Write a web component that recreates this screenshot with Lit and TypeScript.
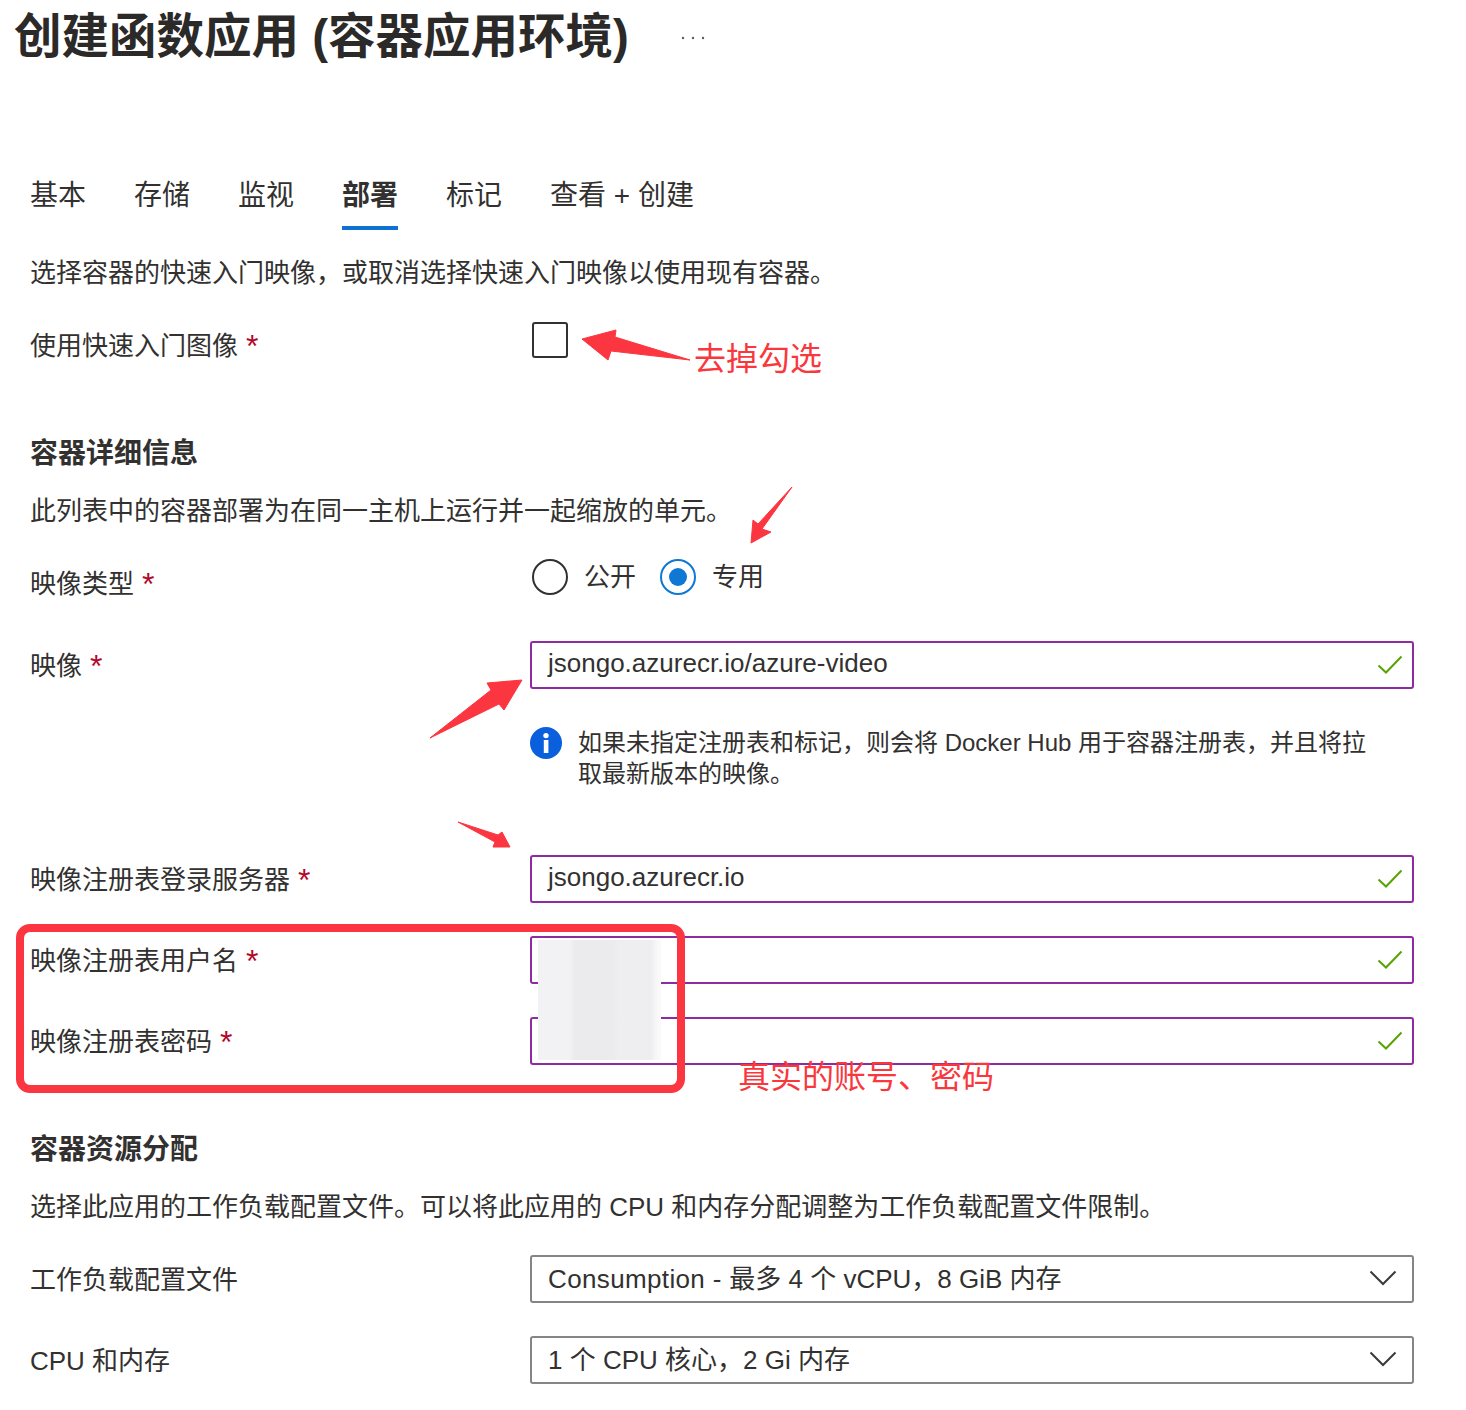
import { LitElement, html, css, svg } from "lit";
import { customElement } from "lit/decorators.js";

const check = html`<svg class="tick" width="26" height="20" viewBox="0 0 26 20"><path d="M1.5 10.5 L9 17.5 L24.5 1.5" fill="none" stroke="#57a300" stroke-width="2"/></svg>`;
const chev = html`<svg class="chev" width="28" height="16" viewBox="0 0 28 16"><path d="M1.5 1.5 L14 14 L26.5 1.5" fill="none" stroke="#3b3a39" stroke-width="2"/></svg>`;

@customElement("app-root")
export class AppRoot extends LitElement {
  static styles = css`
    :host {
      display: block; position: relative; width: 1466px; height: 1410px; overflow: hidden;
      background: #fff; color: #323130; box-sizing: border-box; padding: 0 52px 0 30px;
      font: 26px/36px "Liberation Sans", "Noto Sans CJK SC", sans-serif;
    }
    .head { display: flex; align-items: flex-start; height: 70px; margin-left: -16px; }
    h1 { margin: 0; font-size: 47.5px; line-height: 73px; font-weight: 700; white-space: nowrap; color: #2b2a29; }
    .more { margin-left: 52px; margin-top: 36px; display: block; flex: none; }
    .tabs { display: flex; gap: 48px; margin-top: 106px; font-size: 28px; }
    .tab { height: 54px; padding-top: 2px; box-sizing: border-box; white-space: nowrap; }
    .tab.on { font-weight: 700; border-bottom: 4px solid #0f72d2; }
    p { margin: 0; white-space: nowrap; }
    .intro { margin-top: 25px; }
    .row { display: grid; grid-template-columns: 500px 1fr; }
    .req { color: #b3072b; font-size: 32px; line-height: 26px; font-weight: 400; margin-left: -1px; vertical-align: -2px; }
    h2 { margin: 0; font-size: 28px; line-height: 36px; font-weight: 700; }
    .check-row { margin-top: 36px; height: 36px; }
    .plain { padding-top: 1px; }
    .box { width: 32px; height: 32px; margin: -5px 0 0 2px; border: 2px solid #323130; border-radius: 3px; }
    .s1 { margin-top: 73px; }
    .sub { margin-top: 21px; }
    .radio-row { margin-top: 36px; height: 36px; }
    .radios { display: flex; align-items: center; height: 36px; margin: -6px 0 0 2px; }
    .dot { width: 32px; height: 32px; border: 2px solid #323130; border-radius: 50%; display: grid; place-items: center; margin-right: 16px; }
    .dot.on { border-color: #0f78d4; margin-left: 24px; }
    .dot.on::after { content: ""; width: 18px; height: 18px; border-radius: 50%; background: #0f78d4; }
    .field-row { height: 48px; }
    .field-row .lab { line-height: 48px; padding-top: 1px; }
    .field {
      position: relative; box-sizing: border-box; height: 48px; border: 2px solid #8f2ba0; border-radius: 3px;
      padding: 0 16px; line-height: 40px; white-space: nowrap;
    }
    .field.sel { border-color: #858585; line-height: 44px; }
    .wide { letter-spacing: 0.36px; }
    .tick { position: absolute; right: 9px; top: 12px; }
    .chev { position: absolute; right: 15px; top: 13px; }
    .g33 { margin-top: 33px; }
    .m-image { margin-top: 40px; }
    .info { display: flex; gap: 16px; margin: 39px 0 0 500px; font-size: 24px; line-height: 30.5px; }
    .info svg { flex: none; margin-top: -1px; }
    .info div { width: 800px; }
    .m-server { margin-top: 66px; }
    .s2 { margin-top: 67px; }
    .m-sel { margin-top: 30px; }
    .note { position: absolute; color: #f9383e; font-size: 32px; line-height: 40px; white-space: nowrap; }
    .n1 { left: 694px; top: 339px; }
    .n2 { left: 738px; top: 1057px; }
    .frame { position: absolute; left: 16px; top: 924px; width: 669px; height: 169px; box-sizing: border-box; border: 8px solid #fb3640; border-radius: 14px; }
    .blur { position: absolute; left: 538px; top: 940px; width: 123px; height: 120px;
      background: linear-gradient(90deg, #f2f1f3 0, #f2f1f3 26%, #ebeaed 30%, #ebeaed 60%, #eeedef 66%, #eeedef 92%, #f8f7f8 96%, #fbfafb 100%); }
    .arrows { position: absolute; left: 0; top: 0; }
  `;

  render() {
    const arrows = [
      "582,339 616,330 615,337 690,360 611,351 608,360",
      "792,487 758,524 753,520 751,543 771,532 762,529",
      "430,738 491,690 487,683 522,680 504,710 499,704",
      "458,822 498,835 502,832 510,847 493,847 495,842",
    ];
    return html`
      <div class="head">
        <h1>创建函数应用 (容器应用环境)</h1>
        <svg class="more" width="24" height="4" viewBox="0 0 24 4" fill="#605e5c"><circle cx="2" cy="2" r="1.2"/><circle cx="12" cy="2" r="1.2"/><circle cx="22" cy="2" r="1.2"/></svg>
      </div>
      <div class="tabs">
        <div class="tab">基本</div><div class="tab">存储</div><div class="tab">监视</div>
        <div class="tab on">部署</div><div class="tab">标记</div><div class="tab">查看 + 创建</div>
      </div>
      <p class="intro">选择容器的快速入门映像，或取消选择快速入门映像以使用现有容器。</p>
      <div class="row check-row"><div class="plain">使用快速入门图像<span class="req"> *</span></div><div class="box"></div></div>

      <h2 class="s1">容器详细信息</h2>
      <p class="sub">此列表中的容器部署为在同一主机上运行并一起缩放的单元。</p>
      <div class="row radio-row">
        <div class="plain">映像类型<span class="req"> *</span></div>
        <div class="radios"><span class="dot"></span><span>公开</span><span class="dot on"></span><span>专用</span></div>
      </div>
      <div class="row field-row m-image"><div class="lab">映像<span class="req"> *</span></div><div class="field">jsongo.azurecr.io/azure-video${check}</div></div>
      <div class="info">
        <svg width="32" height="32" viewBox="0 0 32 32"><circle cx="16" cy="16" r="16" fill="#0a5fdc"/><rect x="13.8" y="13" width="4.6" height="13" fill="#fff"/><circle cx="16" cy="8.6" r="2.7" fill="#fff"/></svg>
        <div>如果未指定注册表和标记，则会将 Docker Hub 用于容器注册表，并且将拉取最新版本的映像。</div>
      </div>
      <div class="row field-row m-server"><div class="lab">映像注册表登录服务器<span class="req"> *</span></div><div class="field">jsongo.azurecr.io${check}</div></div>
      <div class="row field-row g33"><div class="lab">映像注册表用户名<span class="req"> *</span></div><div class="field">${check}</div></div>
      <div class="row field-row g33"><div class="lab">映像注册表密码<span class="req"> *</span></div><div class="field">${check}</div></div>

      <h2 class="s2">容器资源分配</h2>
      <p class="sub">选择此应用的工作负载配置文件。可以将此应用的 CPU 和内存分配调整为工作负载配置文件限制。</p>
      <div class="row field-row m-sel"><div class="lab">工作负载配置文件</div><div class="field sel"><span class="wide">Consumption - </span>最多 4 个 vCPU，8 GiB 内存${chev}</div></div>
      <div class="row field-row g33"><div class="lab">CPU 和内存</div><div class="field sel">1 个 CPU 核心，2 Gi 内存${chev}</div></div>

      <div class="blur"></div>
      <div class="frame"></div>
      <svg class="arrows" width="1466" height="1410" viewBox="0 0 1466 1410" fill="#fb3640" stroke="#fb3640" stroke-width="1" stroke-linejoin="round">
        ${arrows.map((p) => svg`<polygon points=${p}/>`)}
      </svg>
      <div class="note n1">去掉勾选</div>
      <div class="note n2">真实的账号、密码</div>
    `;
  }
}
